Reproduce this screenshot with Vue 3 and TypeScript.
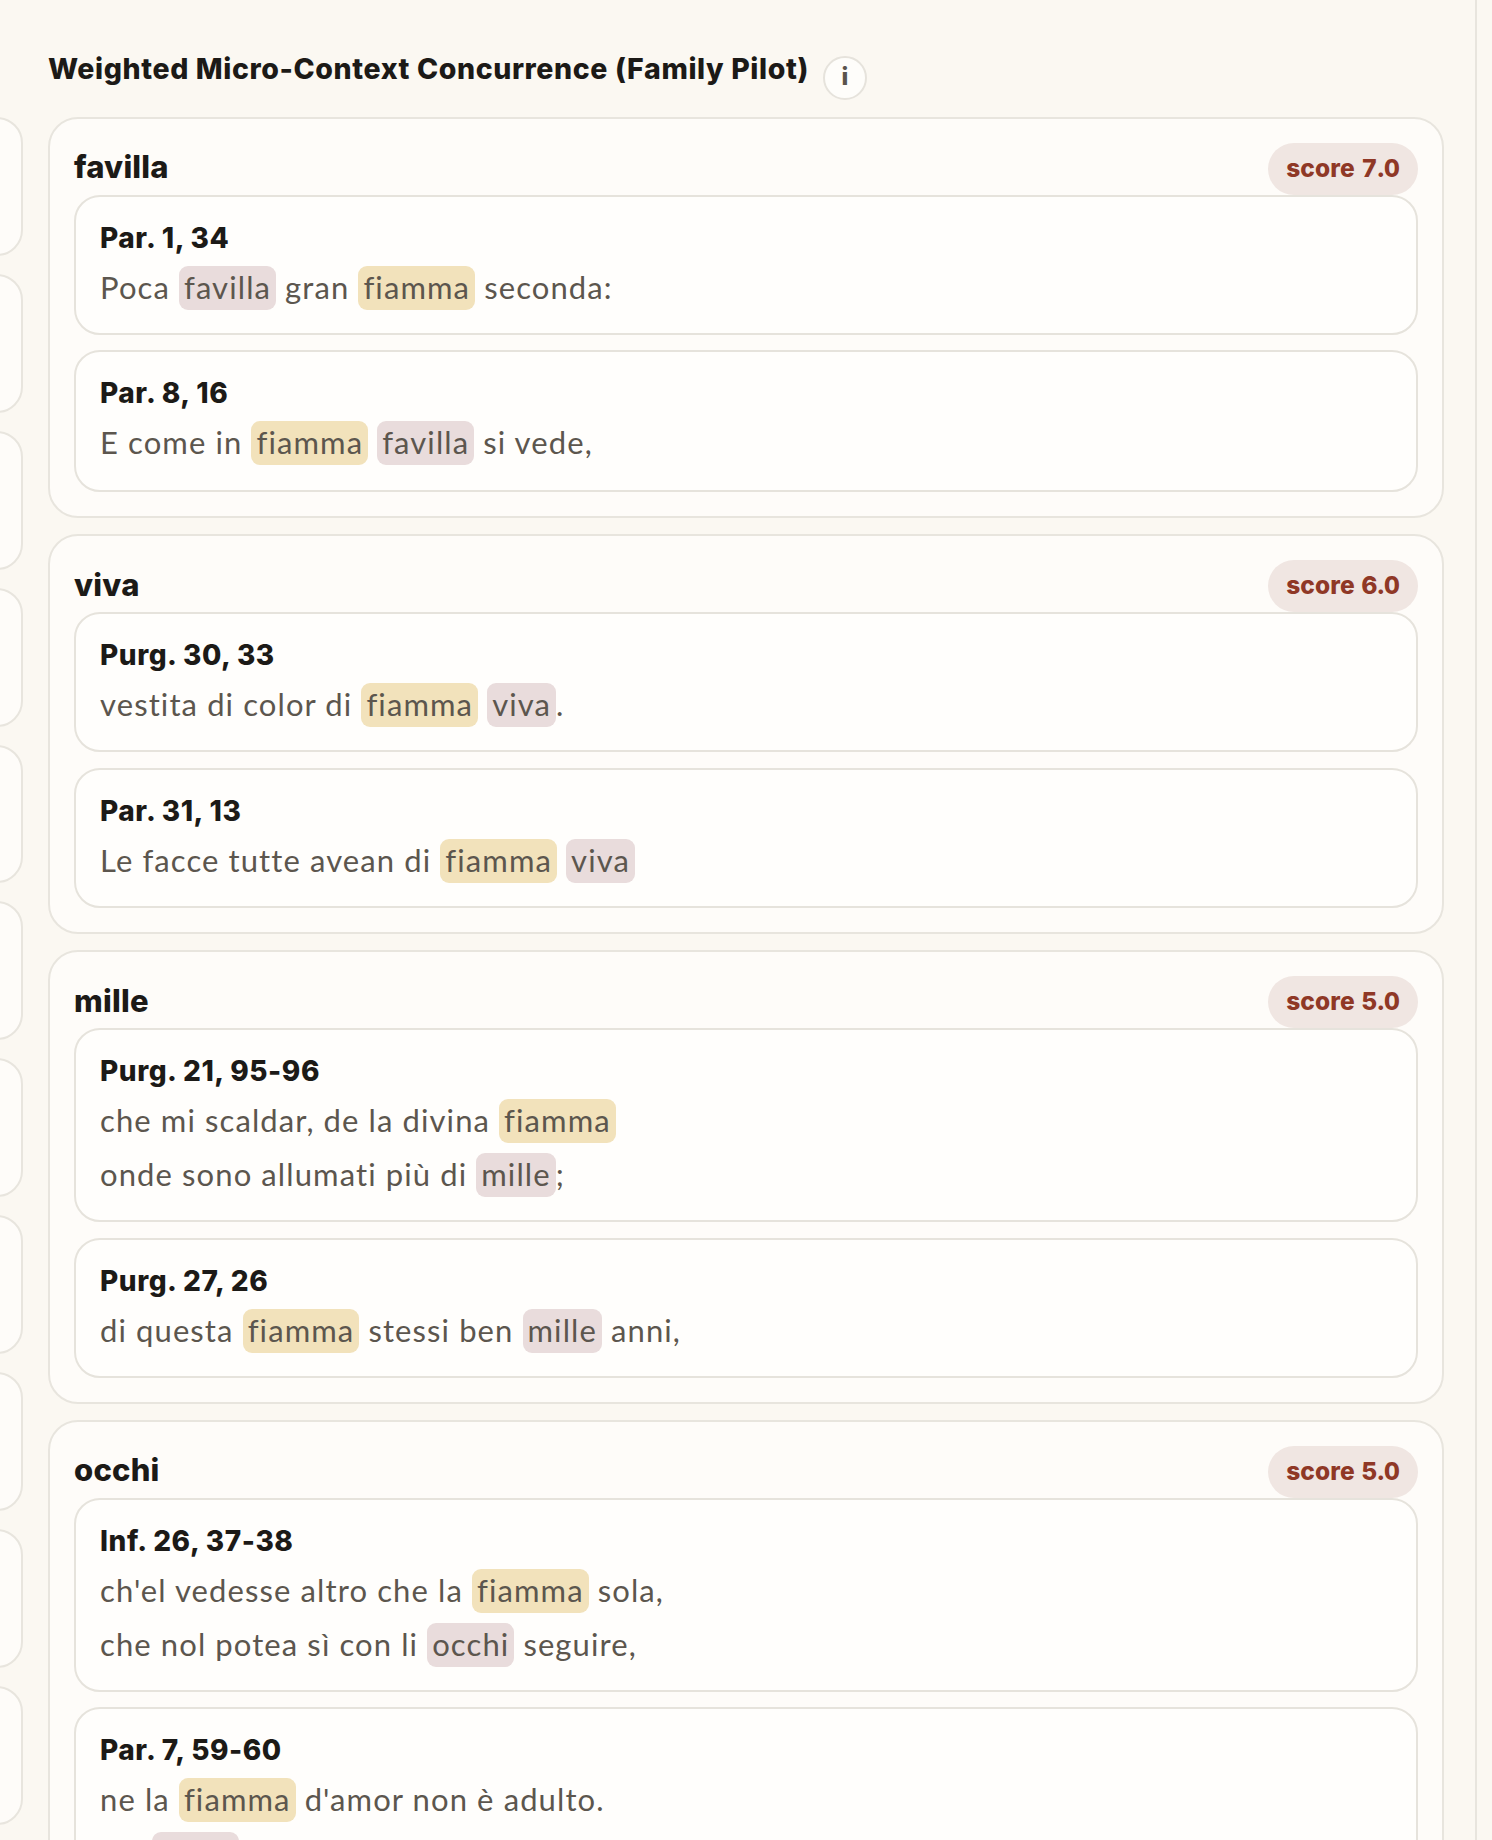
<script setup lang="ts">
type Kind = "word" | "flame";
type Part = { t: string; k?: Kind };
type Verse = { ref: string; lines: Part[][] };
type Entry = { word: string; score: string; verses: Verse[] };

const fiamma: Part = { t: "fiamma", k: "flame" };
const mark = (t: string): Part => ({ t, k: "word" });

const entries: Entry[] = [
  {
    word: "favilla",
    score: "score 7.0",
    verses: [
      { ref: "Par. 1, 34", lines: [[{ t: "Poca " }, mark("favilla"), { t: " gran " }, fiamma, { t: " seconda:" }]] },
      { ref: "Par. 8, 16", lines: [[{ t: "E come in " }, fiamma, { t: " " }, mark("favilla"), { t: " si vede," }]] },
    ],
  },
  {
    word: "viva",
    score: "score 6.0",
    verses: [
      { ref: "Purg. 30, 33", lines: [[{ t: "vestita di color di " }, fiamma, { t: " " }, mark("viva"), { t: "." }]] },
      { ref: "Par. 31, 13", lines: [[{ t: "Le facce tutte avean di " }, fiamma, { t: " " }, mark("viva")]] },
    ],
  },
  {
    word: "mille",
    score: "score 5.0",
    verses: [
      {
        ref: "Purg. 21, 95-96",
        lines: [
          [{ t: "che mi scaldar, de la divina " }, fiamma],
          [{ t: "onde sono allumati più di " }, mark("mille"), { t: ";" }],
        ],
      },
      { ref: "Purg. 27, 26", lines: [[{ t: "di questa " }, fiamma, { t: " stessi ben " }, mark("mille"), { t: " anni," }]] },
    ],
  },
  {
    word: "occhi",
    score: "score 5.0",
    verses: [
      {
        ref: "Inf. 26, 37-38",
        lines: [
          [{ t: "ch'el vedesse altro che la " }, fiamma, { t: " sola," }],
          [{ t: "che nol potea sì con li " }, mark("occhi"), { t: " seguire," }],
        ],
      },
      {
        ref: "Par. 7, 59-60",
        lines: [
          [{ t: "ne la " }, fiamma, { t: " d'amor non è adulto." }],
          [{ t: "a li " }, mark("occhi"), { t: " di ciascuno il cui ingegno" }],
        ],
      },
    ],
  },
];

// the neighbouring column only peeks in at the left edge
const neighbours = Array.from({ length: 11 }, (_, i) => i);
</script>

<template>
  <div class="page">
    <div class="board">
      <aside class="neighbour">
        <div v-for="n in neighbours" :key="n" class="stub"></div>
      </aside>
      <main class="main">
        <div class="title-row">
          <h2 class="title">Weighted Micro-Context Concurrence (Family Pilot)</h2>
          <span class="info">i</span>
        </div>
        <section v-for="entry in entries" :key="entry.word" class="entry">
          <header class="entry-head">
            <span class="term">{{ entry.word }}</span>
            <span class="score">{{ entry.score }}</span>
          </header>
          <div class="verses">
            <article v-for="verse in entry.verses" :key="verse.ref" class="verse">
              <div class="ref">{{ verse.ref }}</div>
              <div v-for="(line, i) in verse.lines" :key="i" class="line">
                <template v-for="(part, j) in line" :key="j">
                  <span v-if="part.k" :class="['hl', part.k]">{{ part.t }}</span>
                  <template v-else>{{ part.t }}</template>
                </template>
              </div>
            </article>
          </div>
        </section>
      </main>
    </div>
  </div>
</template>

<style>
html,
body {
  margin: 0;
  background: #fbf8f2;
}
</style>

<style scoped>
.page {
  width: 1492px;
  height: 1840px;
  overflow: hidden;
  background: #fbf8f2;
  font-family: Lato, "Noto Sans", sans-serif;
  color: #1c1a17;
}

.board {
  width: 1477px;
  height: 1840px;
  box-sizing: border-box;
  border-right: 2px solid #e8e5de;
  display: flex;
  gap: 25px;
  overflow: hidden;
}

.neighbour {
  flex: 0 0 1395px;
  margin-left: -1372px;
  padding-top: 117px;
  display: flex;
  flex-direction: column;
  gap: 18px;
}

.stub {
  flex: 0 0 138.9px;
  box-sizing: border-box;
  background: #fefcf9;
  border: 2px solid #e8e5de;
  border-radius: 26px;
}

.main {
  flex: 0 0 1396px;
  padding-top: 48px;
  display: flex;
  flex-direction: column;
  gap: 16px;
}

.title-row {
  flex: none;
  display: flex;
  align-items: flex-start;
  height: 52.7px;
}

.title {
  margin: 0;
  font-family: Inter, Lato, sans-serif;
  font-size: 28.5px;
  letter-spacing: 0.6px;
  line-height: 42px;
  font-weight: 800;
  color: #1c1a17;
}

.info {
  flex: none;
  box-sizing: border-box;
  width: 44px;
  height: 44px;
  margin: 8px 0 0 14px;
  border: 2px solid #e6e3dc;
  border-radius: 50%;
  background: #fefdfa;
  color: #5a544c;
  font-family: Inter, Lato, sans-serif;
  font-size: 24px;
  font-weight: 800;
  line-height: 38px;
  text-align: center;
}

.entry {
  flex: none;
  box-sizing: border-box;
  padding: 24px;
  background: #fefcf9;
  border: 2px solid #e8e5de;
  border-radius: 30px;
}

.entry-head {
  display: flex;
  justify-content: space-between;
  align-items: center;
  height: 52px;
}

.term {
  padding-bottom: 4px;
  font-family: Inter, Lato, sans-serif;
  font-size: 31px;
  letter-spacing: 0.2px;
  font-weight: 800;
  color: #1c1a17;
}

.score {
  box-sizing: border-box;
  height: 52px;
  padding: 0 18px;
  border-radius: 26px;
  background: #f0e6e2;
  color: #8f3826;
  font-family: Inter, Lato, sans-serif;
  font-size: 24.5px;
  font-variant-numeric: tabular-nums;
  letter-spacing: 0.1px;
  font-weight: 800;
  line-height: 50px;
}

.verses {
  display: flex;
  flex-direction: column;
  gap: 15.7px;
}

.verse {
  box-sizing: border-box;
  padding: 19px 24px 19px 24px;
  background: #fffefc;
  border: 2px solid #e6e3dc;
  border-radius: 26px;
}

/* this one card sits 2px taller in the reference */
.entry:nth-of-type(1) .verse:last-child {
  padding-bottom: 21px;
}

.ref {
  font-family: Inter, Lato, sans-serif;
  font-size: 28px;
  letter-spacing: 0.55px;
  font-weight: 800;
  line-height: 44px;
  color: #1c1a17;
}

.line {
  height: 54px;
  font-size: 31px;
  letter-spacing: 1.1px;
  line-height: 54px;
  color: #5c564e;
}

.hl {
  display: inline-block;
  height: 44px;
  padding: 0 5px;
  border-radius: 9px;
  line-height: 42px;
}

.hl.word {
  background: #e9dcdc;
}

.hl.flame {
  background: #f2e2bb;
}
</style>
